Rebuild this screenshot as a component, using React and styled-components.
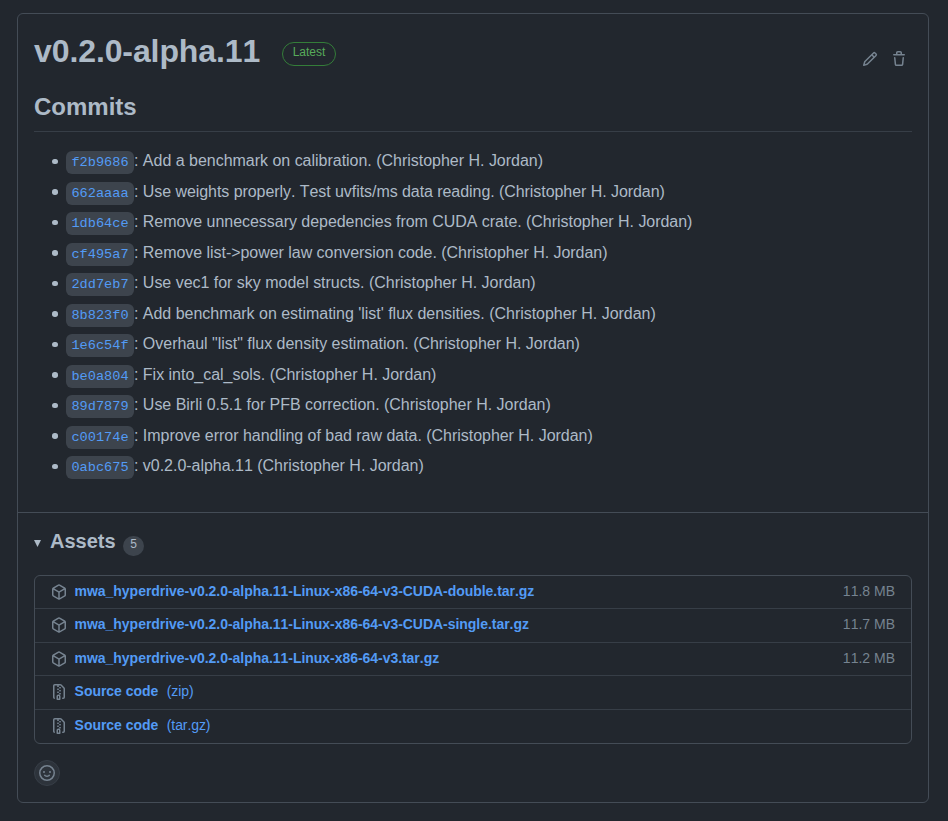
import React from "react";
import styled, { createGlobalStyle } from "styled-components";

const GlobalStyle = createGlobalStyle`
  * { box-sizing: border-box; }
  body {
    margin: 0;
    background: #22272e;
    color: #adbac7;
    font-family: "Liberation Sans", Arial, sans-serif;
    font-size: 16px;
    line-height: 24px;
    font-kerning: none;
  }
`;

const Page = styled.main`
  height: 821px;
  padding: 13px 19px 18px 17px;
  overflow: hidden;
`;

const Card = styled.article`
  height: 790px;
  border: 1px solid #444c56;
  border-radius: 6px;
`;

const Release = styled.section`
  height: 499px;
  padding: 17px 16px 0;
  border-bottom: 1px solid #444c56;
`;

const TitleRow = styled.header`
  display: flex;
  align-items: flex-start;
  height: 60px;
`;

const Title = styled.h1`
  margin: 0;
  width: 248px;
  font-size: 32px;
  line-height: 40px;
  letter-spacing: -0.1px;
  white-space: nowrap;
`;

const LatestLabel = styled.span`
  width: 54px;
  height: 24px;
  margin-top: 11px;
  border: 1px solid #347d39;
  border-radius: 12px;
  color: #57ab5a;
  font-size: 12px;
  line-height: 18px;
  text-align: center;
`;

const Actions = styled.div`
  display: flex;
  gap: 13px;
  margin: 20px 5px 0 auto;
`;

const Icon = styled.svg`
  display: block;
  flex: none;
  width: 16px;
  height: 16px;
  fill: #768390;
`;

const SectionTitle = styled.h2`
  margin: 0 0 17px;
  height: 41px;
  border-bottom: 1px solid #373e47;
  font-size: 24px;
  line-height: 32px;
`;

const CommitList = styled.ul`
  display: grid;
  grid-auto-rows: 30.5px;
  margin: 0;
  padding: 0;
  list-style: none;
`;

const Commit = styled.li`
  display: flex;
  align-items: flex-start;
  height: 24px;
  white-space: pre;
`;

const Bullet = styled.span`
  width: 5.5px;
  height: 5.5px;
  margin: 9.5px 8.25px 0 18.25px;
  border-radius: 50%;
  background: #adbac7;
`;

const Hash = styled.a`
  width: 68px;
  height: 23px;
  margin-top: 2px;
  border-radius: 6px;
  background: #3d444d;
  color: #539bf5;
  font-family: "Liberation Mono", monospace;
  font-size: 13.6px;
  line-height: 23px;
  text-align: center;
`;

const Message = styled.span`
  letter-spacing: ${(p) => p.$tracking}px;
`;

const Assets = styled.section`
  padding: 14px 16px 0;
`;

const AssetsHeader = styled.div`
  display: flex;
  align-items: flex-start;
  height: 48px;
`;

const Triangle = styled.svg`
  width: 7px;
  height: 7px;
  margin: 13px 9px 0 0;
  fill: #adbac7;
`;

const AssetsTitle = styled.h3`
  margin: 0;
  width: 73px;
  font-size: 20px;
  line-height: 28px;
`;

const Counter = styled.span`
  width: 21px;
  height: 20px;
  margin-top: 9px;
  border-radius: 10px;
  background: #3d444d;
  font-size: 12px;
  line-height: 17px;
  text-align: center;
`;

const AssetTable = styled.div`
  height: 169px;
  border: 1px solid #444c56;
  border-radius: 6px;
  overflow: hidden;
`;

const AssetRow = styled.div`
  display: flex;
  align-items: flex-start;
  height: ${(p) => p.$height}px;
  padding: 5px 16px 0;
  border-bottom: ${(p) => (p.$last ? "0" : "1px solid #373e47")};
  font-size: 14px;
  line-height: 21px;
  white-space: nowrap;

  ${Icon} { margin: 3px 7.6px 0 0; }
`;

const AssetLink = styled.a`
  color: #539bf5;
  font-weight: 700;
  letter-spacing: -0.037px;
`;

const Format = styled.a`
  margin-left: 8.6px;
  color: #539bf5;
  letter-spacing: -0.1px;
`;

const Size = styled.span`
  margin-left: auto;
  color: #768390;
`;

const ReactionButton = styled.button`
  display: grid;
  place-items: center;
  width: 26px;
  height: 26px;
  margin-top: 16px;
  padding: 0;
  border: 1px solid #373e47;
  border-radius: 50%;
  background: #2d333b;
`;

const paths = {
  pencil: "M11.013 1.427a1.75 1.75 0 012.474 0l1.086 1.086a1.75 1.75 0 010 2.474l-8.61 8.61c-.21.21-.47.364-.756.445l-3.251.93a.75.75 0 01-.927-.928l.929-3.25a1.75 1.75 0 01.445-.758l8.61-8.61zm1.414 1.06a.25.25 0 00-.354 0L10.811 3.75l1.439 1.44 1.263-1.263a.25.25 0 000-.354l-1.086-1.086zM11.189 6.25L9.75 4.81l-6.286 6.287a.25.25 0 00-.064.108l-.558 1.953 1.953-.558a.249.249 0 00.108-.064l6.286-6.286z",
  trash: "M6.5 1.75a.25.25 0 01.25-.25h2.5a.25.25 0 01.25.25V3h-3V1.75zm4.5 0V3h2.25a.75.75 0 010 1.5H2.75a.75.75 0 010-1.5H5V1.75C5 .784 5.784 0 6.75 0h2.5C10.216 0 11 .784 11 1.75zM4.496 6.675a.75.75 0 10-1.492.15l.66 6.6A1.75 1.75 0 005.405 15h5.19c.9 0 1.652-.681 1.741-1.576l.66-6.6a.75.75 0 00-1.492-.149l-.66 6.6a.25.25 0 01-.249.225h-5.19a.25.25 0 01-.249-.225l-.66-6.6z",
  package: "M8.878.392a1.75 1.75 0 00-1.756 0l-5.25 3.045A1.75 1.75 0 001 4.951v6.098c0 .624.332 1.2.872 1.514l5.25 3.045a1.75 1.75 0 001.756 0l5.25-3.045c.54-.313.872-.89.872-1.514V4.951c0-.624-.332-1.2-.872-1.514L8.878.392zM7.875 1.69a.25.25 0 01.25 0l4.63 2.685L8 7.133 3.245 4.375l4.63-2.685zM2.5 5.677v5.372c0 .09.047.171.125.216l4.625 2.683V8.432L2.5 5.677zm6.25 8.271l4.625-2.683a.25.25 0 00.125-.216V5.677L8.75 8.432v5.516z",
  zip: "M3.5 1.75a.25.25 0 01.25-.25h3a.75.75 0 000 1.5h.5a.75.75 0 000-1.5h2.086a.25.25 0 01.177.073l2.914 2.914a.25.25 0 01.073.177v8.586a.25.25 0 01-.25.25h-.5a.75.75 0 000 1.5h.5A1.75 1.75 0 0014 13.25V4.664c0-.464-.184-.909-.513-1.237L10.573.513A1.75 1.75 0 009.336 0H3.75A1.75 1.75 0 002 1.75v11.5c0 .649.353 1.214.874 1.515a.75.75 0 10.752-1.298.25.25 0 01-.126-.217V1.75zM8.75 3a.75.75 0 000 1.5h.5a.75.75 0 000-1.5h-.5zM6 5.25a.75.75 0 01.75-.75h.5a.75.75 0 010 1.5h-.5A.75.75 0 016 5.25zm2 1.5A.75.75 0 018.75 6h.5a.75.75 0 010 1.5h-.5A.75.75 0 018 6.75zm-1.25.75a.75.75 0 000 1.5h.5a.75.75 0 000-1.5h-.5zM8 9.75A.75.75 0 018.75 9h.5a.75.75 0 010 1.5h-.5A.75.75 0 018 9.75zm-.75.75a1.75 1.75 0 00-1.75 1.75v3c0 .414.336.75.75.75h2.5a.75.75 0 00.75-.75v-3a1.75 1.75 0 00-1.75-1.75h-.5zM7 12.25a.25.25 0 01.25-.25h.5a.25.25 0 01.25.25v2.25H7v-2.25z",
  smiley: "M1.5 8a6.5 6.5 0 1113 0 6.5 6.5 0 01-13 0zM8 0a8 8 0 100 16A8 8 0 008 0zM5 8a1 1 0 100-2 1 1 0 000 2zm7-1a1 1 0 11-2 0 1 1 0 012 0zM5.32 9.636a.75.75 0 011.038.175l.007.009c.103.118.22.222.35.31.264.178.683.37 1.285.37.602 0 1.02-.192 1.285-.371.13-.088.247-.192.35-.31l.007-.008a.75.75 0 111.222.87c-.05.07-.12.15-.204.235-.16.166-.338.316-.53.445-.63.418-1.37.638-2.127.629-.946 0-1.652-.308-2.126-.63a3.32 3.32 0 01-.735-.685.75.75 0 01.183-1.044z",
};

const Glyph = ({ name }) => (
  <Icon viewBox="0 0 16 16" aria-hidden="true">
    <path fillRule="evenodd" d={paths[name]} />
  </Icon>
);

const commits = [
  { hash: "f2b9686", message: "Add a benchmark on calibration. (Christopher H. Jordan)", tracking: -0.017 },
  { hash: "662aaaa", message: "Use weights properly. Test uvfits/ms data reading. (Christopher H. Jordan)", tracking: -0.06 },
  { hash: "1db64ce", message: "Remove unnecessary depedencies from CUDA crate. (Christopher H. Jordan)", tracking: -0.038 },
  { hash: "cf495a7", message: "Remove list->power law conversion code. (Christopher H. Jordan)", tracking: -0.042 },
  { hash: "2dd7eb7", message: "Use vec1 for sky model structs. (Christopher H. Jordan)", tracking: -0.02 },
  { hash: "8b823f0", message: "Add benchmark on estimating 'list' flux densities. (Christopher H. Jordan)", tracking: -0.025 },
  { hash: "1e6c54f", message: "Overhaul \"list\" flux density estimation. (Christopher H. Jordan)", tracking: -0.018 },
  { hash: "be0a804", message: "Fix into_cal_sols. (Christopher H. Jordan)", tracking: -0.02 },
  { hash: "89d7879", message: "Use Birli 0.5.1 for PFB correction. (Christopher H. Jordan)", tracking: -0.02 },
  { hash: "c00174e", message: "Improve error handling of bad raw data. (Christopher H. Jordan)", tracking: -0.03 },
  { hash: "0abc675", message: "v0.2.0-alpha.11 (Christopher H. Jordan)", tracking: -0.025 },
];

const assets = [
  { icon: "package", name: "mwa_hyperdrive-v0.2.0-alpha.11-Linux-x86-64-v3-CUDA-double.tar.gz", size: "11.8 MB", height: 33 },
  { icon: "package", name: "mwa_hyperdrive-v0.2.0-alpha.11-Linux-x86-64-v3-CUDA-single.tar.gz", size: "11.7 MB", height: 34 },
  { icon: "package", name: "mwa_hyperdrive-v0.2.0-alpha.11-Linux-x86-64-v3.tar.gz", size: "11.2 MB", height: 33 },
  { icon: "zip", name: "Source code", format: "(zip)", height: 34 },
  { icon: "zip", name: "Source code", format: "(tar.gz)", height: 33 },
];

export default function App() {
  return (
    <Page>
      <GlobalStyle />
      <Card>
        <Release>
          <TitleRow>
            <Title>v0.2.0-alpha.11</Title>
            <LatestLabel>Latest</LatestLabel>
            <Actions>
              <Glyph name="pencil" />
              <Glyph name="trash" />
            </Actions>
          </TitleRow>
          <SectionTitle>Commits</SectionTitle>
          <CommitList>
            {commits.map(({ hash, message, tracking }) => (
              <Commit key={hash}>
                <Bullet />
                <Hash>{hash}</Hash>
                <Message $tracking={tracking}>: {message}</Message>
              </Commit>
            ))}
          </CommitList>
        </Release>
        <Assets>
          <AssetsHeader>
            <Triangle viewBox="0 0 7 7"><path d="M0 0h7L3.5 7z" /></Triangle>
            <AssetsTitle>Assets</AssetsTitle>
            <Counter>5</Counter>
          </AssetsHeader>
          <AssetTable>
            {assets.map((asset, i) => (
              <AssetRow key={i} $height={asset.height} $last={i === assets.length - 1}>
                <Glyph name={asset.icon} />
                <AssetLink>{asset.name}</AssetLink>
                {asset.format && <Format>{asset.format}</Format>}
                {asset.size && <Size>{asset.size}</Size>}
              </AssetRow>
            ))}
          </AssetTable>
          <ReactionButton aria-label="Add reaction"><Glyph name="smiley" /></ReactionButton>
        </Assets>
      </Card>
    </Page>
  );
}
